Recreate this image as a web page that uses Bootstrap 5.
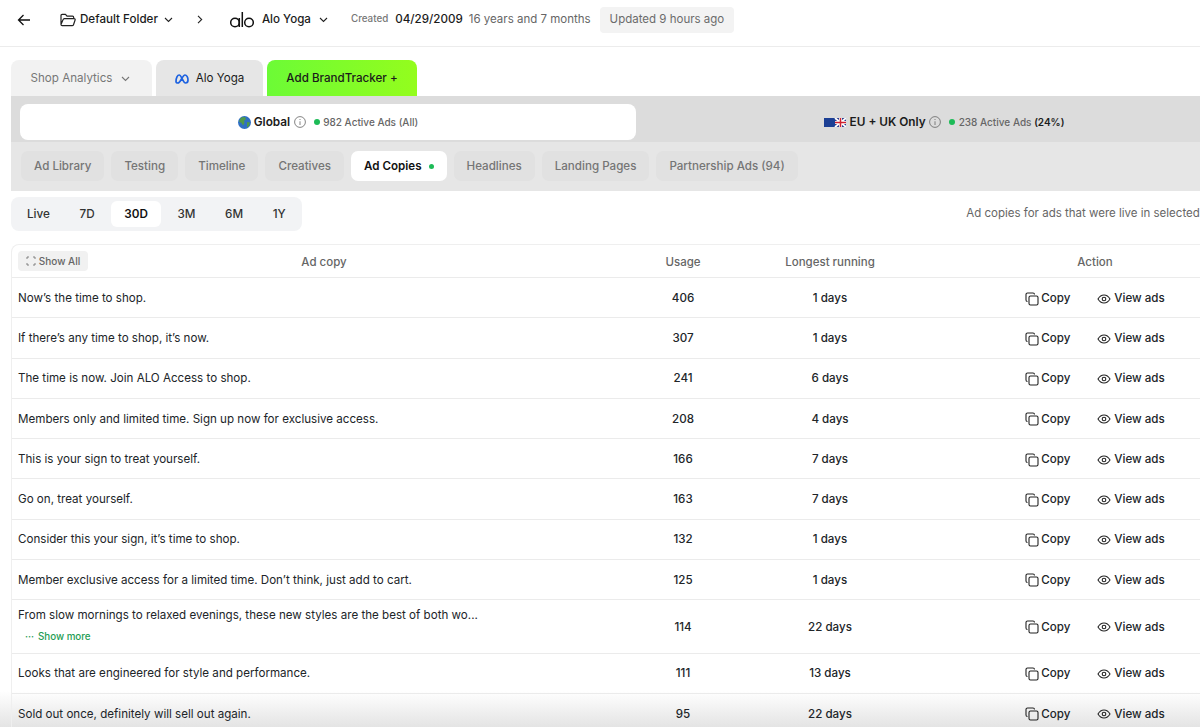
<!DOCTYPE html>
<html lang="en">
<head>
  <meta charset="UTF-8">
  <meta name="viewport" content="width=device-width, initial-scale=1">
  <title>Alo Yoga - Ad Copies</title>
  <link href="https://cdn.jsdelivr.net/npm/bootstrap@5.3.0/dist/css/bootstrap.min.css" rel="stylesheet">
  <style>
    html, body { height: 727px; overflow: hidden; }
    body { font-family: Inter, "Liberation Sans", sans-serif; font-size: 11.6px; color: #1b1b1b; background: #fff; position: relative; }
    svg { display: block; flex: none; }

    .top-bar { height: 47px; border-bottom: 1px solid #ececec; padding: 0 0 7px 17px; white-space: nowrap; }
    .crumb { font-size: 11.6px; font-weight: 500; }
    .folder-icon { margin-left: 29px; }
    .muted-txt { color: #666; font-size: 11.5px; }
    .created-lbl { font-size: 9.8px; font-weight: 500; color: #777; }
    .created-date { font-size: 11.6px; font-weight: 500; }
    .updated-pill { background: #f3f3f3; border-radius: 4px; height: 26px; padding: 0 10px; color: #6b6b6b; font-size: 11.5px; }

    .page-wrap { width: 1252px; margin-left: 11px; position: relative; z-index: 1; }
    .top-tabs { height: 36px; margin-top: 13px; gap: 4px; }
    .top-tab { border-radius: 8px 8px 0 0; height: 36px; padding-top: 2px; font-size: 11.6px; }
    .tab-shop { width: 141px; background: #f2f2f2; color: #777; padding-right: 2px; }
    .tab-brand { width: 107px; background: #e6e6e6; }
    .tab-add { width: 150px; background: linear-gradient(90deg, #6cfb36, #94fd1d); font-weight: 500; }

    .gray-panel { background: #e6e6e6; height: 95px; }
    .market-row { background: #dcdcdc; height: 46px; margin-top: 0; padding: 8px 0 0 9px; }
    .market-on, .market-off { height: 36px; width: 616px; white-space: nowrap; }
    .market-on { background: #fff; border-radius: 8px; }
    .market-name { font-size: 11.8px; font-weight: 600; padding-top: 1px; }
    .market-ads { font-size: 10px; font-weight: 500; color: #666; }
    .market-ads b { color: #1b1b1b; font-weight: 600; }
    .green-dot { width: 6px; height: 6px; border-radius: 50%; background: #1dbb57; flex: none; }

    .sub-tabs { gap: 7px; padding: 9px 0 0 10px; }
    .sub-tab { height: 30px; padding: 2px 13px 0; border-radius: 7px; background: #e1e1e1; color: #757575; font-size: 11.6px; font-weight: 500; }
    .sub-tab.picked { background: #fff; color: #111; font-weight: 600; }
    .tab-dot { width: 5px; height: 5px; margin-left: 7px; margin-top: -1px; }

    .range-row { margin-top: 6px; height: 34px; padding-right: 25px; }
    .range-box { background: #f2f3f5; border-radius: 8px; height: 34px; width: 291px; padding: 0 3px; gap: 3.6px; }
    .range-item { height: 26px; border-radius: 6px; padding: 2px 13px 0; font-size: 11.7px; font-weight: 500; color: #333; }
    .range-item.picked { background: #fff; color: #111; font-weight: 600; }
    .range-note { font-size: 11.5px; color: #666; }

    .copy-table { --bs-table-bg: transparent; width: 1248px; table-layout: fixed; margin: 13px 0 0; border: 1px solid #efefef; border-bottom: 0; border-collapse: separate; border-spacing: 0; border-radius: 8px 0 0 0; }
    .copy-table th, .copy-table td { padding: 2px 6px 0; border: 0; border-bottom: 1px solid #ebebeb; vertical-align: middle; font-size: 11.6px; }
    .copy-table th { height: 33px; padding-top: 3px; font-weight: 500; color: #666; text-align: center; font-size: 11.5px; }
    .copy-table td { height: 40.25px; font-weight: 400; }
    .copy-table tr.tall-row td { height: 53.5px; }
    .copy-table tr.tall-row td:first-child { padding-bottom: 3px; }
    .num-cell { text-align: center; font-weight: 500 !important; }
    .show-all { background: #f1f1f1; border-radius: 4px; height: 20px; width: 70px; margin-top: -3px; font-size: 10px; color: #666; font-weight: 500; gap: 3px; }
    .show-more { color: #1f9d55; font-size: 9.8px; font-weight: 500; padding: 6px 0 0 7px; gap: 4px; }
    .act-wrap { gap: 27px; }
    .act-btn { font-size: 11.6px; font-weight: 500; gap: 3px; }
    .act-copy { gap: 2px; }

    .fade-bottom { position: absolute; left: 0; right: 0; bottom: 0; height: 36px; background: linear-gradient(rgba(228,228,228,0), rgba(228,228,228,1)); pointer-events: none; }
  </style>
</head>
<body>

<div class="fade-bottom"></div>

<header class="top-bar d-flex align-items-center">
  <svg width="14" height="14" viewBox="0 0 14 14" fill="none" stroke="#111" stroke-width="1.3"><path d="M13 7H1.500M6.500 2 1.500 7l5 5"/></svg>
  <svg class="folder-icon" width="16" height="14" viewBox="0 0 16 14" fill="none" stroke="#222" stroke-width="1.200" stroke-linejoin="round"><path d="M1 11.500V2.500A1.200 1.200 0 0 1 2.200 1.300H5.500L7 3.200H12.500A1.200 1.200 0 0 1 13.700 4.400V5.500M1 11.500 3 6.700A1.700 1.700 0 0 1 4.500 5.600H14.200A1 1 0 0 1 15.100 7L13.500 11.700A1.500 1.500 0 0 1 12.100 12.700H2.200A1.200 1.200 0 0 1 1 11.500Z"/></svg>
  <span class="crumb ms-1">Default Folder</span>
  <svg style="margin-left:6px" width="9" height="6" viewBox="0 0 9 6" fill="none" stroke="#222" stroke-width="1.100"><path d="M1 1l3.500 3.500L8 1"/></svg>
  <svg style="margin-left:24px" width="6" height="9" viewBox="0 0 6 9" fill="none" stroke="#222" stroke-width="1.100"><path d="M1 .8 4.700 4.500 1 8.200"/></svg>
  <svg style="margin-left:27px" width="24" height="16" viewBox="0 0 24 16" fill="none" stroke="#111" stroke-width="1.500"><circle cx="5" cy="10.500" r="4.300"/><path d="M9.300 6v9M12.300 0v15"/><circle cx="19" cy="10.500" r="4.300"/></svg>
  <span class="crumb" style="margin-left:8px">Alo Yoga</span>
  <svg style="margin-left:8px" width="9" height="6" viewBox="0 0 9 6" fill="none" stroke="#222" stroke-width="1.100"><path d="M1 1l3.500 3.500L8 1"/></svg>
  <span class="created-lbl" style="margin-left:23px">Created</span>
  <span class="created-date" style="margin-left:7px">04/29/2009</span>
  <span class="muted-txt" style="margin-left:6px">16 years and 7 months</span>
  <span class="updated-pill d-flex align-items-center" style="margin-left:9px">Updated 9 hours ago</span>
</header>

<div class="page-wrap">
  <div class="top-tabs d-flex">
    <div class="top-tab tab-shop d-flex align-items-center justify-content-center gap-2">Shop Analytics
      <svg style="margin-left:1px" width="9" height="6" viewBox="0 0 9 6" fill="none" stroke="#777" stroke-width="1.100"><path d="M1 1l3.500 3.500L8 1"/></svg>
    </div>
    <div class="top-tab tab-brand d-flex align-items-center justify-content-center" style="gap:7px">
      <svg width="14" height="10" viewBox="0 0 14 10" fill="none" stroke="#1d62e0" stroke-width="1.700"><path d="M1 7.500C1 4 2.500 1 4.200 1 6.500 1 8 9 10.500 9 12 9 13 7.800 13 6 13 3 11.500 1 10 1 7.500 1 5.500 9 3 9 1.800 9 1 8.500 1 7.500Z"/></svg>
      Alo Yoga
    </div>
    <div class="top-tab tab-add d-flex align-items-center justify-content-center">Add BrandTracker +</div>
  </div>

  <div class="gray-panel">
    <div class="market-row d-flex align-items-start">
      <div class="market-on d-flex align-items-center justify-content-center">
        <svg width="13" height="13" viewBox="0 0 13 13"><circle cx="6.500" cy="6.500" r="6.500" fill="#2f6fc4"/><path d="M3 1.500 7 1 8 3 6 5 6.500 7 5 9.500 3.500 7 1 5.500ZM9 6l3 .5-1 3.500-2 1.500Z" fill="#4f9a4a"/></svg>
        <span class="market-name" style="margin-left:3px">Global</span>
        <svg style="margin-left:4px" width="12" height="12" viewBox="0 0 12 12" fill="none" stroke="#666" stroke-width=".8"><circle cx="6" cy="6" r="5.400"/><path d="M6 5.300V9M6 3v1"/></svg>
        <span class="green-dot" style="margin-left:8px"></span>
        <span class="market-ads" style="margin-left:3px">982 Active Ads (All)</span>
      </div>
      <div class="market-off d-flex align-items-center justify-content-center">
        <svg width="22" height="9" viewBox="0 0 22 9"><rect width="11" height="9" fill="#1c3f94"/><rect x="11" width="11" height="9" fill="#2a3f8f"/><path d="M11 0l11 9M22 0 11 9" stroke="#fff" stroke-width="1.800"/><path d="M16.500 0v9M11 4.500h11" stroke="#fff" stroke-width="3"/><path d="M16.500 0v9M11 4.500h11" stroke="#d0202e" stroke-width="1.500"/></svg>
        <span class="market-name" style="margin-left:4px">EU + UK Only</span>
        <svg style="margin-left:3px" width="12" height="12" viewBox="0 0 12 12" fill="none" stroke="#666" stroke-width=".8"><circle cx="6" cy="6" r="5.400"/><path d="M6 5.300V9M6 3v1"/></svg>
        <span class="green-dot" style="margin-left:8px"></span>
        <span class="market-ads" style="margin-left:4px">238 Active Ads <b>(24%)</b></span>
      </div>
    </div>
    <div class="sub-tabs d-flex">
      <div class="sub-tab d-flex align-items-center">Ad Library</div>
      <div class="sub-tab d-flex align-items-center">Testing</div>
      <div class="sub-tab d-flex align-items-center">Timeline</div>
      <div class="sub-tab d-flex align-items-center">Creatives</div>
      <div class="sub-tab picked d-flex align-items-center">Ad Copies <span class="green-dot tab-dot"></span></div>
      <div class="sub-tab d-flex align-items-center">Headlines</div>
      <div class="sub-tab d-flex align-items-center">Landing Pages</div>
      <div class="sub-tab d-flex align-items-center">Partnership Ads (94)</div>
    </div>
  </div>

  <div class="range-row d-flex justify-content-between align-items-center">
    <div class="range-box d-flex align-items-center">
      <div class="range-item d-flex align-items-center">Live</div>
      <div class="range-item d-flex align-items-center">7D</div>
      <div class="range-item picked d-flex align-items-center">30D</div>
      <div class="range-item d-flex align-items-center">3M</div>
      <div class="range-item d-flex align-items-center">6M</div>
      <div class="range-item d-flex align-items-center">1Y</div>
    </div>
    <div class="range-note">Ad copies for ads that were live in selected period</div>
  </div>

  <table class="table copy-table">
    <colgroup><col style="width:624px"><col style="width:94px"><col style="width:200px"><col style="width:330px"></colgroup>
    <thead>
      <tr>
        <th>
          <div class="d-flex align-items-center">
            <div class="show-all d-flex align-items-center justify-content-center">
              <svg width="10" height="10" viewBox="0 0 10 10" fill="none" stroke="#777" stroke-width=".9"><path d="M1 3V1h2M7 1h2v2M9 7v2H7M3 9H1V7"/></svg>
              Show All
            </div>
            <div class="flex-grow-1 text-center" style="padding-right:70px">Ad copy</div>
          </div>
        </th>
        <th>Usage</th>
        <th>Longest running</th>
        <th>Action</th>
      </tr>
    </thead>
    <tbody id="copyRows"></tbody>
  </table>
</div>

<script src="https://cdn.jsdelivr.net/npm/bootstrap@5.3.0/dist/js/bootstrap.bundle.min.js"></script>
<script>
  var rows = [
    ["Now’s the time to shop.", 406, 1],
    ["If there’s any time to shop, it’s now.", 307, 1],
    ["The time is now. Join ALO Access to shop.", 241, 6],
    ["Members only and limited time. Sign up now for exclusive access.", 208, 4],
    ["This is your sign to treat yourself.", 166, 7],
    ["Go on, treat yourself.", 163, 7],
    ["Consider this your sign, it’s time to shop.", 132, 1],
    ["Member exclusive access for a limited time. Don’t think, just add to cart.", 125, 1],
    ["From slow mornings to relaxed evenings, these new styles are the best of both wo...", 114, 22, true],
    ["Looks that are engineered for style and performance.", 111, 13],
    ["Sold out once, definitely will sell out again.", 95, 22]
  ];
  var copyIcon = '<svg width="14" height="14" viewBox="0 0 14 14" fill="none" stroke="#222" stroke-width="1.100"><rect x="4" y="4" width="9" height="9" rx="1.500"/><path d="M2.500 9.500A1.500 1.500 0 0 1 1 8V2.500A1.500 1.500 0 0 1 2.500 1H8A1.500 1.500 0 0 1 9.500 2.500"/></svg>';
  var eyeIcon = '<svg width="14" height="10" viewBox="0 0 14 10" fill="none" stroke="#222" stroke-width="1.100"><path d="M1 5c1.500-2.600 3.500-4 6-4s4.500 1.400 6 4c-1.500 2.600-3.500 4-6 4S2.500 7.600 1 5Z"/><circle cx="7" cy="5" r="1.800"/></svg>';
  document.getElementById("copyRows").innerHTML = rows.map(function (r) {
    var more = r[3] ? '<div class="show-more d-flex align-items-center"><span>···</span>Show more</div>' : '';
    return '<tr class="' + (r[3] ? 'tall-row' : '') + '"><td>' + r[0] + more + '</td>' +
      '<td class="num-cell">' + r[1] + '</td><td class="num-cell">' + r[2] + ' days</td>' +
      '<td><div class="act-wrap d-flex justify-content-center">' +
      '<span class="act-btn act-copy d-flex align-items-center">' + copyIcon + 'Copy</span>' +
      '<span class="act-btn d-flex align-items-center">' + eyeIcon + 'View ads</span></div></td></tr>';
  }).join("");
</script>
</body>
</html>
